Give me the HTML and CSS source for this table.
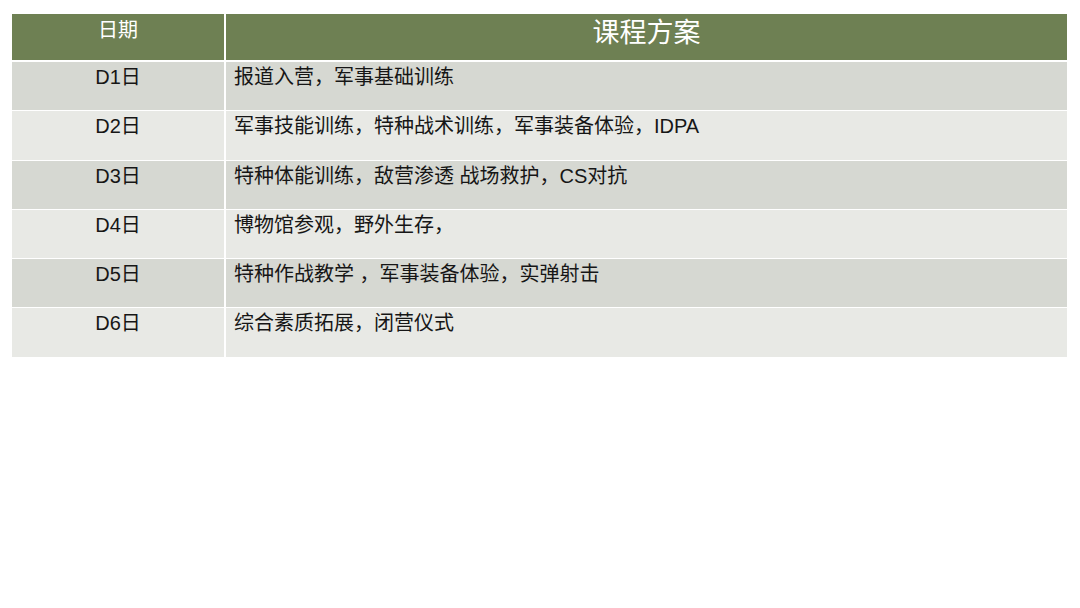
FILE: index.html
```html
<!DOCTYPE html>
<html lang="zh-CN">
<head>
<meta charset="utf-8">
<title>课程方案</title>
<link rel="stylesheet" href="styles.css">
</head>
<body>
<table class="plan">
  <thead>
    <tr>
      <th class="col-date">日期</th>
      <th class="col-plan">课程方案</th>
    </tr>
  </thead>
  <tbody>
    <tr class="odd"><td class="col-date">D1日</td><td class="col-plan">报道入营，军事基础训练</td></tr>
    <tr class="even"><td class="col-date">D2日</td><td class="col-plan">军事技能训练，特种战术训练，军事装备体验，IDPA</td></tr>
    <tr class="odd"><td class="col-date">D3日</td><td class="col-plan">特种体能训练，敌营渗透 战场救护，CS对抗</td></tr>
    <tr class="even"><td class="col-date">D4日</td><td class="col-plan">博物馆参观，野外生存，</td></tr>
    <tr class="odd"><td class="col-date">D5日</td><td class="col-plan">特种作战教学 ，军事装备体验，实弹射击</td></tr>
    <tr class="even"><td class="col-date">D6日</td><td class="col-plan">综合素质拓展，闭营仪式</td></tr>
  </tbody>
</table>
</body>
</html>
```
FILE: styles.css
```css
html, body {
  margin: 0;
  padding: 0;
  background: #ffffff;
}

body {
  font-family: "Liberation Sans", "Noto Sans CJK SC", sans-serif;
  color: #161616;
}

.plan {
  margin: 14px 0 0 12px;
  border-collapse: separate;
  border-spacing: 0;
  table-layout: fixed;
  width: 1055px;
}

.plan th,
.plan td {
  vertical-align: top;
  padding: 0;
  box-sizing: content-box;
}

.plan th {
  background: #6e8053;
  color: #ffffff;
  font-weight: normal;
  border-bottom: 1px solid #ffffff;
}

.plan th.col-date {
  width: 212px;
  font-size: 20px;
  line-height: 24px;
  padding-top: 4px;
  height: 42px;
  text-align: center;
}

.plan th.col-plan {
  font-size: 27px;
  line-height: 32px;
  padding-top: 3px;
  height: 43px;
  text-align: center;
  border-left: 2px solid #ffffff;
}

.plan td {
  height: 45.3px;
  font-size: 20px;
  line-height: 24px;
  padding-top: 3px;
  border-top: 1px solid #ffffff;
}

.plan td.col-date {
  text-align: center;
}

.plan td.col-plan {
  text-align: left;
  padding-left: 8px;
  border-left: 2px solid #ffffff;
}

.plan tr.odd td {
  background: #d6d8d2;
}

.plan tr.even td {
  background: #e8e9e5;
}
```
